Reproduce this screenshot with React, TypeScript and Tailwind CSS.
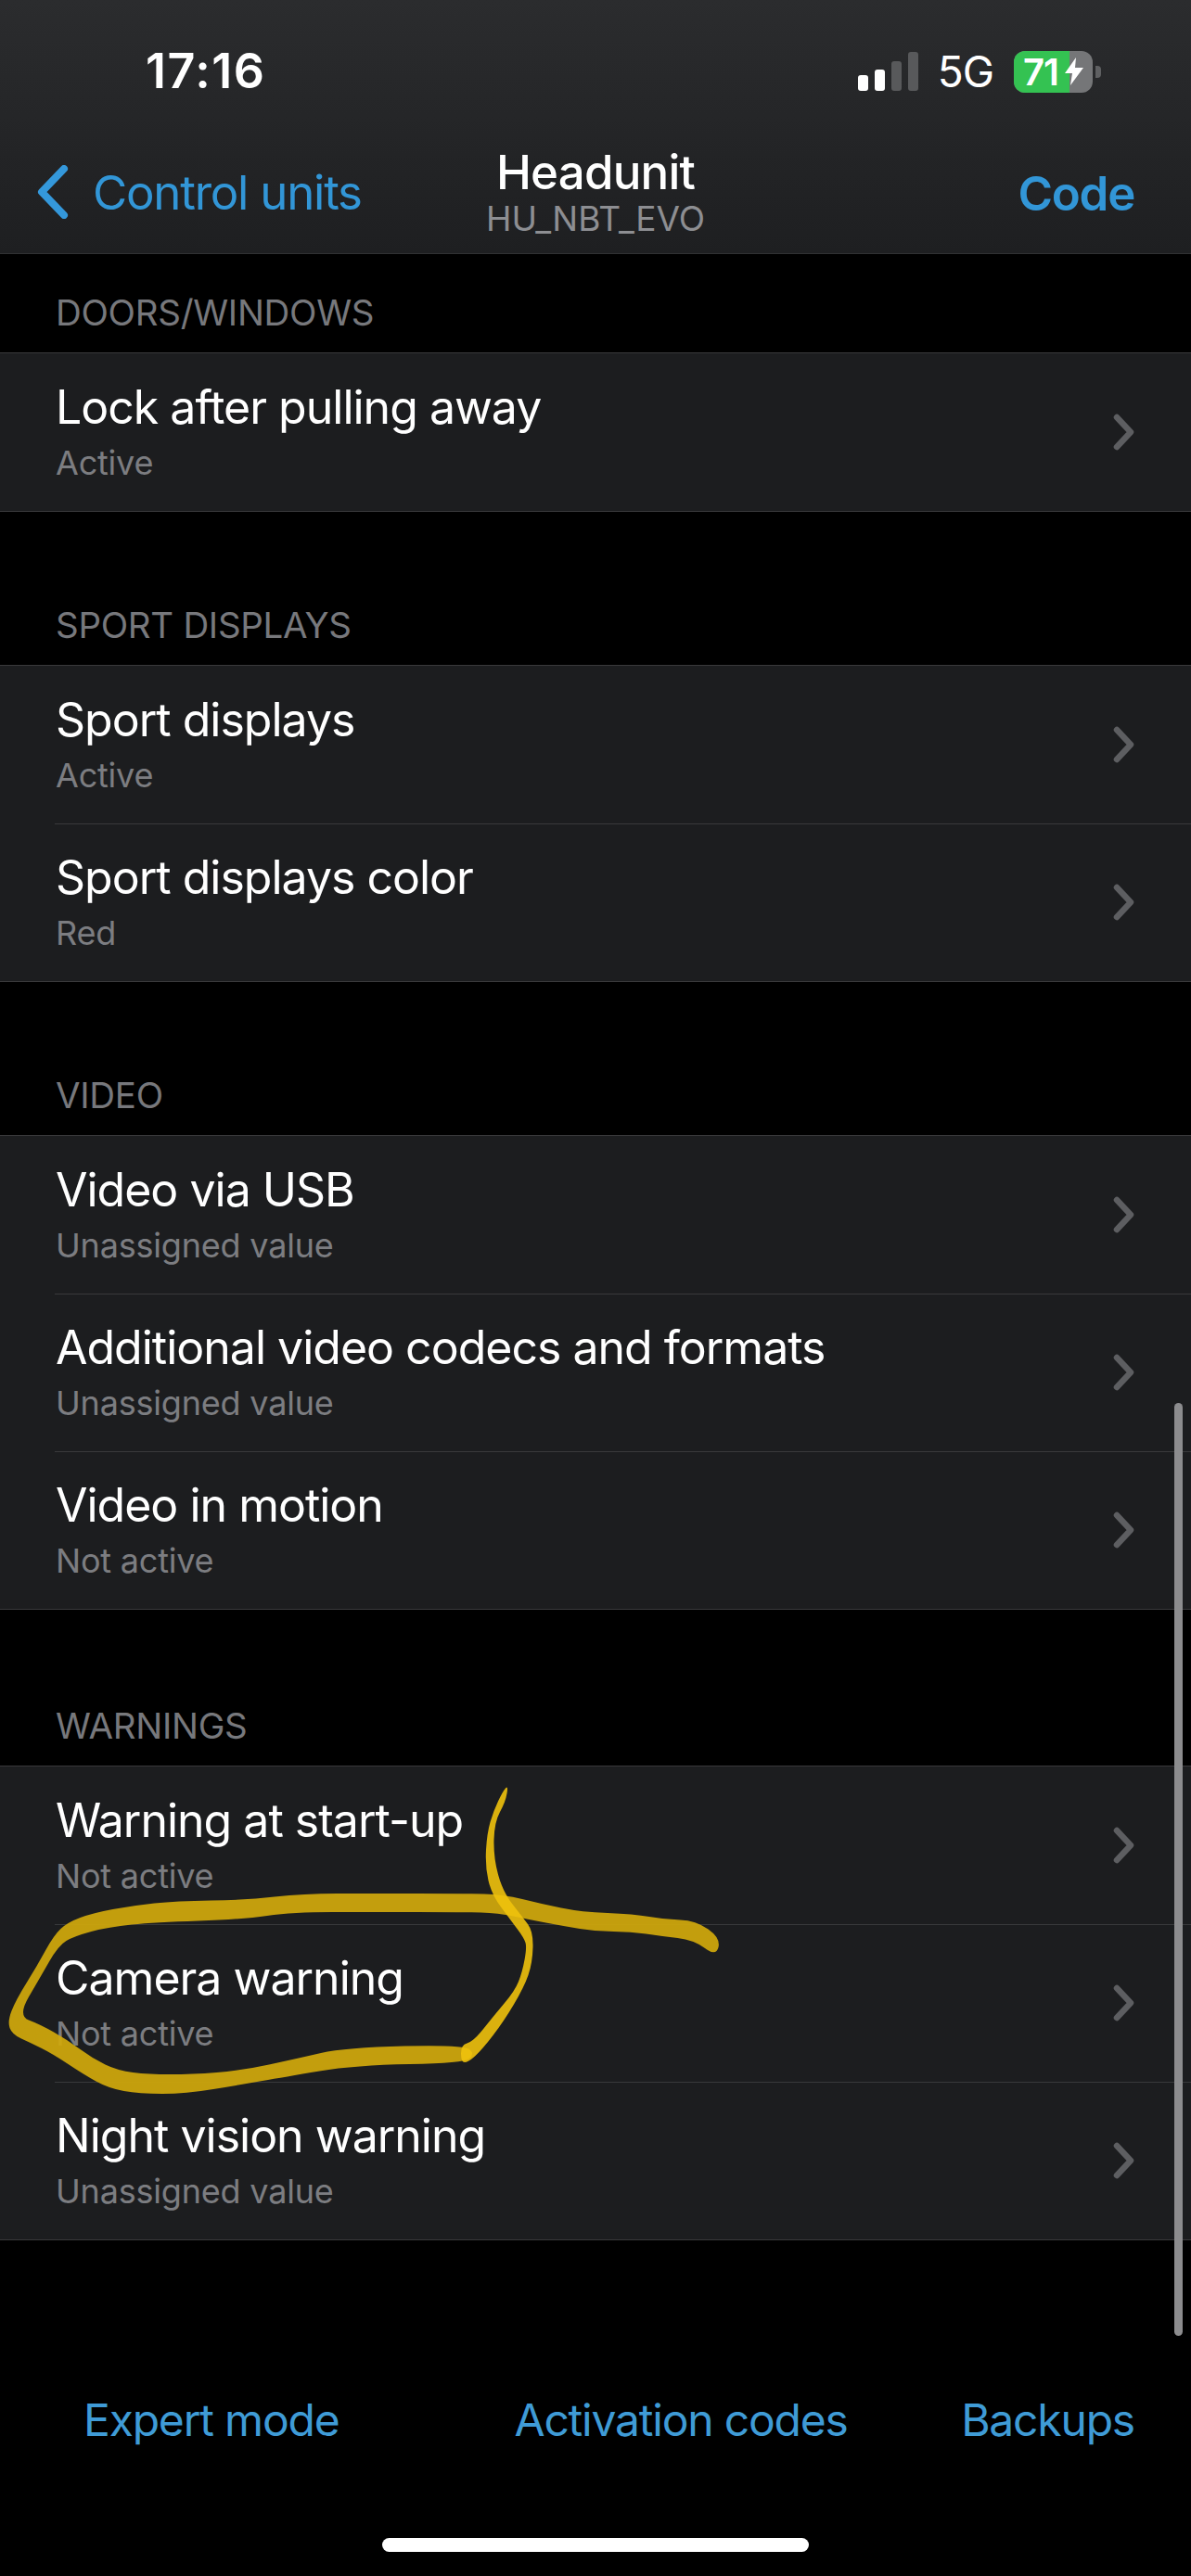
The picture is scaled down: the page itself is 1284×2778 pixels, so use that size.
const sections = [
  {
    title: "DOORS/WINDOWS",
    labelClass: "h-[106px]",
    rows: [{ name: "Lock after pulling away", value: "Active" }],
  },
  {
    title: "SPORT DISPLAYS",
    labelClass: "h-[165px]",
    rows: [
      { name: "Sport displays", value: "Active" },
      { name: "Sport displays color", value: "Red" },
    ],
  },
  {
    title: "VIDEO",
    labelClass: "h-[165px]",
    rows: [
      { name: "Video via USB", value: "Unassigned value" },
      { name: "Additional video codecs and formats", value: "Unassigned value" },
      { name: "Video in motion", value: "Not active" },
    ],
  },
  {
    title: "WARNINGS",
    labelClass: "h-[168px]",
    rows: [
      { name: "Warning at start-up", value: "Not active" },
      { name: "Camera warning", value: "Not active" },
      { name: "Night vision warning", value: "Unassigned value" },
    ],
  },
];

// outlines of the marker strokes, page pixels
const loopOutline = [
  [777, 2090], [750, 2071], [717, 2070], [683, 2064], [627, 2062], [583, 2053], [543, 2043], [500, 2042], [400, 2042],
  [327, 2042], [265, 2049], [190, 2050], [143, 2055], [100, 2063], [73, 2073], [58, 2087], [40, 2120], [17, 2157],
  [8, 2180], [13, 2194], [33, 2203], [57, 2215], [90, 2237], [117, 2252], [150, 2258], [200, 2258], [260, 2248],
  [306, 2240], [383, 2227], [500, 2225], [512, 2215], [500, 2205], [372, 2208], [320, 2220], [260, 2233], [207, 2237],
  [160, 2237], [127, 2233], [100, 2220], [73, 2200], [43, 2183], [19, 2174], [43, 2133], [63, 2098], [80, 2088],
  [117, 2078], [167, 2073], [260, 2070], [316, 2062], [400, 2062], [500, 2062], [537, 2063], [570, 2070], [607, 2077],
  [643, 2083], [680, 2083], [713, 2088], [748, 2092], [772, 2110],
];

const hookOutline = [
  [548, 1925], [545, 1943], [533, 1965], [532, 2003], [542, 2040], [563, 2067], [575, 2083], [574, 2117], [565, 2143],
  [543, 2180], [520, 2210], [505, 2224], [497, 2224], [497, 2205], [510, 2202], [533, 2173], [555, 2147], [563, 2127],
  [568, 2100], [565, 2090], [550, 2070], [530, 2043], [523, 2013], [525, 1977], [532, 1953], [542, 1932],
];

function smoothPath(points: number[][]) {
  const mid = (a: number[], b: number[]) => `${(a[0] + b[0]) / 2} ${(a[1] + b[1]) / 2}`;
  let d = `M${mid(points[points.length - 1], points[0])}`;
  points.forEach((p, i) => {
    d += ` Q${p[0]} ${p[1]} ${mid(p, points[(i + 1) % points.length])}`;
  });
  return d + " Z";
}

function Chevron() {
  return (
    <svg width="25" height="40" viewBox="0 0 25 40" fill="none" className="shrink-0">
      <path d="M5 4 L20 20 L5 36" stroke="#5d5e61" strokeWidth="6.5" strokeLinecap="round" strokeLinejoin="round" />
    </svg>
  );
}

function StatusBar() {
  return (
    <div className="flex h-[154px] items-center pl-[157px]">
      <span className="text-[52px] font-semibold leading-none tracking-[1.5px] text-white">17:16</span>
      <div className="ml-auto mr-[97px] flex items-center">
        <div className="flex h-[42px] items-end gap-[7px]">
          <div className="h-[17px] w-[11px] rounded-[3px] bg-white" />
          <div className="h-[23px] w-[11px] rounded-[3px] bg-white" />
          <div className="h-[32px] w-[11px] rounded-[3px] bg-[#58595b]" />
          <div className="h-[42px] w-[11px] rounded-[3px] bg-[#58595b]" />
        </div>
        <span className="ml-[21px] text-[46px] leading-none tracking-[-1px] text-white">5G</span>
        <div className="relative ml-[22px] flex h-[45px] w-[85px] rounded-[12px] bg-[#757678]">
          <div className="h-full w-[60px] rounded-l-[12px] bg-[#34c252]" />
          <span className="absolute left-[10px] top-[1px] text-[40px] font-semibold leading-[44px] tracking-[-1px] text-white">71</span>
          <svg className="absolute left-[55px] top-[7px]" width="20" height="30" viewBox="0 0 20 30">
            <path d="M12 0 L0 17 H8 L6 30 L20 11 H11 Z" fill="white" />
          </svg>
        </div>
        <div className="ml-[3px] h-[13px] w-[6px] rounded-r-[4px] bg-[#5f6062]" />
      </div>
    </div>
  );
}

function NavBar() {
  return (
    <div className="grid h-[119px] grid-cols-[1fr_auto_1fr] items-start">
      <div className="flex items-center pl-[40px] pt-[24px]">
        <svg width="34" height="58" viewBox="0 0 34 58" fill="none">
          <path d="M29 4 L5 29 L29 54" stroke="#3498db" strokeWidth="8" strokeLinecap="round" strokeLinejoin="round" />
        </svg>
        <span className="ml-[26px] text-[51px] leading-none tracking-[-1.25px] text-[#3296d7]">Control units</span>
      </div>
      <div className="flex flex-col items-center pt-[5px]">
        <span className="text-[51px] font-medium leading-[54px] tracking-[-0.8px] text-white">Headunit</span>
        <span className="text-[37px] leading-[46px] text-[#8d8e92]">HU_NBT_EVO</span>
      </div>
      <div className="flex justify-end pr-[61px] pt-[29px]">
        <span className="text-[51px] font-semibold leading-none tracking-[-1.3px] text-[#3296d7]">Code</span>
      </div>
    </div>
  );
}

function Scribble() {
  return (
    <svg className="pointer-events-none absolute left-0 top-0" width="1284" height="2778" viewBox="0 0 1284 2778">
      <path d={smoothPath(loopOutline)} fill="#d0a80c" fillOpacity="0.93" />
      <path d={smoothPath(hookOutline)} fill="#efc20c" fillOpacity="0.9" />
    </svg>
  );
}

export default function App() {
  return (
    <div className="relative flex h-[2778px] w-[1284px] flex-col overflow-hidden bg-black font-['Inter','Liberation_Sans',sans-serif]">
      <header className="h-[274px] shrink-0 border-b border-[#303133] bg-gradient-to-b from-[#2b2c2e] to-[#1e1f21]">
        <StatusBar />
        <NavBar />
      </header>

      {sections.map((section) => (
        <section key={section.title}>
          <div className={`flex items-end pb-[21px] pl-[60px] ${section.labelClass}`}>
            <span className="text-[38.5px] leading-[44px] tracking-[-0.3px] text-[#77787c]">{section.title}</span>
          </div>
          <div className="border-y border-[#39393b] bg-[#1c1d1f]">
            {section.rows.map((row, i) => (
              <div key={row.name} className="relative flex h-[170px] items-center pl-[60px] pr-[60px]">
                {i > 0 && <div className="absolute left-[59px] right-0 top-0 h-px bg-[#39393b]" />}
                <div className="flex-1 pb-[10px]">
                  <div className="text-[50px] leading-[75px] tracking-[-1px] text-white">{row.name}</div>
                  <div className="text-[36px] leading-[44px] tracking-[-0.2px] text-[#7c7d81]">{row.value}</div>
                </div>
                <Chevron />
              </div>
            ))}
          </div>
        </section>
      ))}

      <div className="flex flex-1 flex-col">
        <div className="mt-[164px] flex items-center pl-[90px] text-[48px] leading-[60px] tracking-[-1.2px] text-[#3f9bd6]">
          <span>Expert mode</span>
          <span className="ml-[189px]">Activation codes</span>
          <span className="ml-auto mr-[61px]">Backups</span>
        </div>
        <div className="mx-auto mt-[97px] h-[15px] w-[460px] rounded-full bg-white" />
      </div>

      <div className="absolute left-[1266px] top-[1513px] h-[1006px] w-[9px] rounded-full bg-[#8c8c8e]" />
      <Scribble />
    </div>
  );
}
